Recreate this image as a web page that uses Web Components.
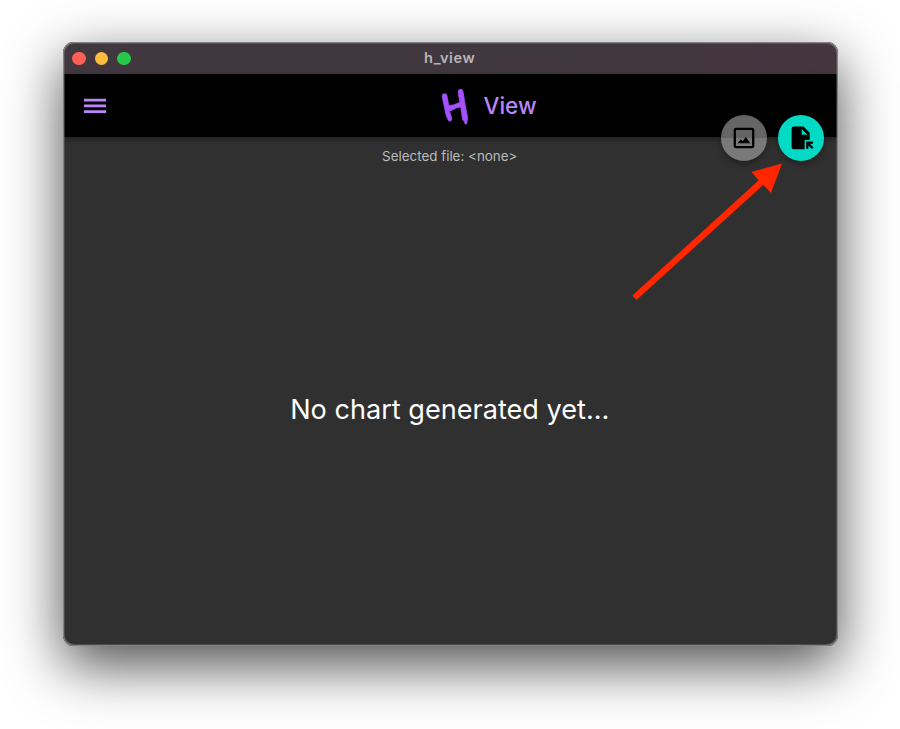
<!DOCTYPE html>
<html lang="en">
<head>
<meta charset="utf-8">
<title>h_view</title>
<style>
body{margin:0;height:729px;background:#fff;overflow:hidden;font-family:Inter,"Liberation Sans",sans-serif}
</style>
</head>
<body>
<app-window>
  <title-bar slot="title">h_view</title-bar>
  <app-header slot="header">View</app-header>
  <chart-panel file="&lt;none&gt;">No chart generated yet...</chart-panel>
  <action-buttons slot="actions"></action-buttons>
</app-window>
<pointer-arrow></pointer-arrow>
<script>
const define=(name,html)=>customElements.define(name,class extends HTMLElement{
  connectedCallback(){
    if(this.shadowRoot)return;
    this.attachShadow({mode:"open"}).innerHTML=html;
    const f=this.shadowRoot.querySelector("[data-file]");
    if(f)f.textContent="Selected file: "+this.getAttribute("file");
  }
});
define("title-bar",`<style>
:host{display:grid;grid-template-columns:1fr auto 1fr;align-items:center;height:32px;box-sizing:border-box;background:linear-gradient(90deg,#41373f,#42373f 75%,#45353f);color:#bab5b9;font-size:14.6px;font-weight:600;line-height:18px}
.lights{display:flex;gap:9px;padding-left:9.2px;padding-top:1px}
i{width:13.6px;height:13.6px;border-radius:50%;background:#ff5f57}
i:nth-child(2){background:#ffbd3e}i:nth-child(3){background:#27c84a}
.name{display:block;letter-spacing:.6px;margin-left:-1px}
</style><div class="lights"><i></i><i></i><i></i></div><span class="name"><slot></slot></span>`);
define("app-header",`<style>
:host{display:grid;grid-template-columns:377px auto 1fr;align-items:center;height:63px;background:#000;color:#bb86fc;font-size:22.5px;font-weight:550;position:relative;box-shadow:0 2px 5px rgba(0,0,0,.35)}
.menu{padding-left:21px;width:22px;height:16px}
.brand{display:flex;align-items:center;gap:14px}
.mark{width:29.5px;height:38px}
svg{display:block}
</style><svg class="menu" viewBox="0 0 22 16"><path d="M0 2.1h22M0 7.9h22M0 13.7h22" stroke="#bb86fc" stroke-width="2.7"/></svg>
<div class="brand"><svg class="mark" viewBox="0 0 29.5 38"><path fill="#a551ff" stroke="#a551ff" stroke-width=".7" stroke-linejoin="round" d="M2.1 9.4Q2 7 4 6.8Q6.6 6.3 7 8.8L8.8 18.6Q13.5 18.6 19.9 15.2L18.1 5.2Q18 2.5 20.2 2.3Q22.6 2.1 23 4.4L25.2 17.5L27.6 30.5Q27.9 33 27 34V36Q26.4 38 25 36.8L24.4 34.4Q22.7 33.5 22.4 31.6L20.7 20Q16 20.6 12.9 22.7L9.6 24.2L11.8 31.5Q11.7 34 10.1 34.3Q8.6 34.4 8 32.6L6.2 28.6Z"/></svg><span><slot></slot></span></div><span></span>`);
define("chart-panel",`<style>
:host{display:grid;grid-template-rows:37px 1fr;justify-items:center;flex:1;background:#303030}
.file{color:#bcbcbc;font-size:13.4px;line-height:18px;align-self:center;margin-right:1px}
.message{color:#fff;font-size:27.1px;line-height:36px;padding-top:218px;margin-right:1px;white-space:nowrap}
</style><div class="file" data-file></div><div class="message"><slot></slot></div>`);
define("action-buttons",`<style>
:host{display:flex;gap:11px}
div{width:46px;height:45.5px;border-radius:50%;display:grid;place-items:center;box-shadow:0 3px 6px rgba(0,0,0,.35)}
.image{background:linear-gradient(#656565 49%,#797979 49%)}.file{background:#03dac6}
svg{display:block;width:28px;height:28px}
</style><div class="image"><svg viewBox="0 0 28 28"><rect x="4.8" y="4.8" width="18.4" height="18.4" rx="1.3" fill="none" stroke="#000" stroke-width="2.3"/><path d="M7.7 19.2L10.8 15.3L12.6 17.2L15.8 12.9L20.3 19.2Z" fill="#000"/></svg></div>
<div class="file"><svg viewBox="0 0 28 28"><path fill-rule="evenodd" d="M6.8 2.5H16.5L22.7 8.7V16H17.6V25.3H6.8Q4.6 25.3 4.6 23.1V4.7Q4.6 2.5 6.8 2.5ZM14.7 5.1V10.7H20.3Z" fill="#000"/><path d="M19.2 17.6H26V19.7H22.8L26.5 23.4L24.9 25L21.3 21.4V24.7H19.2Z" fill="#000"/></svg></div>`);
define("app-window",`<style>
:host{display:flex;flex-direction:column;position:absolute;left:63px;top:42px;width:774.5px;height:604px;border-radius:11px;background:#303030;box-shadow:0 19px 56px rgba(0,0,0,.7)}
.content{display:flex;flex-direction:column;flex:1;overflow:hidden;border-radius:11px}
.actions{position:absolute;right:13.5px;top:73px}
.edge{position:absolute;inset:0;border-radius:11px;box-shadow:inset 0 0 0 1px rgba(150,150,150,.75),inset 0 0 0 2px rgba(110,110,110,.45);pointer-events:none}
</style><div class="content"><slot name="title"></slot><slot name="header"></slot><slot></slot></div><div class="edge"></div><div class="actions"><slot name="actions"></slot></div>`);
define("pointer-arrow",`<style>:host{position:absolute;inset:0;pointer-events:none}svg{display:block}</style>
<svg width="900" height="729" viewBox="0 0 900 729"><path d="M782 163.5L751.5 172L758.7 180.3L632.3 295.5L636.5 300L763.2 185L771 193Z" fill="#ff2600"/></svg>`);
</script>
</body>
</html>
